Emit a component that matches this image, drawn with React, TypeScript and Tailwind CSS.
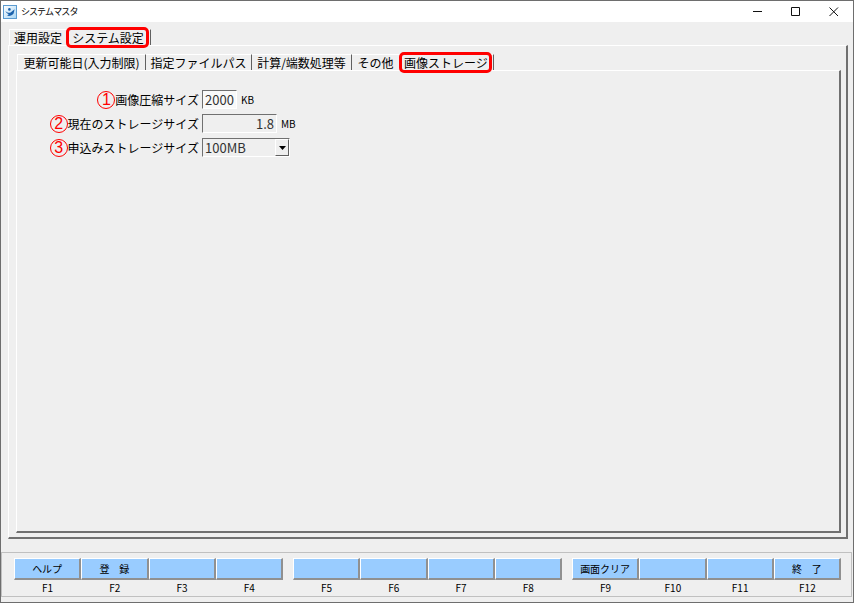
import { useState } from 'react';
import clsx from 'clsx';

const mainTabs = [
  { label: '運用設定', width: 'w-[57px]' },
  { label: 'システム設定', width: 'w-[85px]' },
];

const subTabs = [
  { label: '更新可能日(入力制限)', width: 'w-[129px]' },
  { label: '指定ファイルパス', width: 'w-[106px]' },
  { label: '計算/端数処理等', width: 'w-[100px]' },
  { label: 'その他', width: 'w-[47px]' },
  { label: '画像ストレージ', width: 'w-[95px]' },
];

const keyGroups = [
  [
    { key: 'F1', label: 'ヘルプ' },
    { key: 'F2', label: '登　録' },
    { key: 'F3', label: '' },
    { key: 'F4', label: '' },
  ],
  [
    { key: 'F5', label: '' },
    { key: 'F6', label: '' },
    { key: 'F7', label: '' },
    { key: 'F8', label: '' },
  ],
  [
    { key: 'F9', label: '画面クリア' },
    { key: 'F10', label: '' },
    { key: 'F11', label: '' },
    { key: 'F12', label: '終　了' },
  ],
];

const fieldClass =
  'h-[19px] rounded-none border border-t-[#707070] border-l-[#707070] border-r-white border-b-white px-[2px] text-[13px] leading-[17px] text-[#333] outline-none';

function AppIcon() {
  return (
    <svg width="14" height="14" viewBox="0 0 14 14" aria-hidden="true">
      <defs>
        <linearGradient id="appIcon" x1="0" y1="0" x2="1" y2="1">
          <stop offset="0" stopColor="#ffffff" />
          <stop offset="1" stopColor="#a4d3f2" />
        </linearGradient>
      </defs>
      <rect x="0.5" y="0.5" width="13" height="13" fill="url(#appIcon)" stroke="#5b9bd0" />
      <circle cx="6.4" cy="4.4" r="1.3" fill="#1b62ac" />
      <path d="M2.4 6C4 7.8 6 8.2 7.6 7.4L11.6 4.2 10.6 8.6C9 11 6 11.6 3.8 10.6 5.4 10.2 5.8 9.6 5.4 9 4 8.4 3 7.4 2.4 6Z" fill="#1b62ac" />
    </svg>
  );
}

function TitleBar() {
  return (
    <header className="flex h-[21px] items-center bg-white pl-[2px]">
      <AppIcon />
      <h1 className="ml-1 flex-1 text-[9px] leading-4 [font-feature-settings:'palt']">システムマスタ</h1>
      <button aria-label="最小化" className="flex h-full w-[38px] items-center justify-center">
        <svg width="10" height="10" viewBox="0 0 10 10" stroke="#111" fill="none">
          <path d="M0 4.5h9" />
        </svg>
      </button>
      <button aria-label="最大化" className="flex h-full w-[38px] items-center justify-center">
        <svg width="10" height="10" viewBox="0 0 10 10" stroke="#111" fill="none">
          <path d="M.5 .5h8v8h-8z" />
        </svg>
      </button>
      <button aria-label="閉じる" className="flex h-full w-[38px] items-center justify-center">
        <svg width="10" height="10" viewBox="0 0 10 10" stroke="#111" fill="none">
          <path d="m.5 .5 8.5 8.5M9 .5.5 9" />
        </svg>
      </button>
    </header>
  );
}

type TabBarProps = {
  tabs: { label: string; width: string }[];
  active: number;
  onChange: (index: number) => void;
};

function TabBar({ tabs, active, onChange }: TabBarProps) {
  return (
    <div role="tablist" className="flex pl-px">
      {tabs.map((tab, i) => (
        <button
          key={tab.label}
          role="tab"
          aria-selected={i === active}
          onClick={() => onChange(i)}
          className={clsx(
            'relative flex h-4 items-center justify-center border-t border-t-white text-[12px] leading-[14px] whitespace-nowrap',
            tab.width,
            i + 1 !== active && 'border-r border-r-[#606060]',
            i === 0 && 'border-l border-l-white'
          )}
        >
          {tab.label}
          {i === active && (
            <span className="absolute -top-[3px] right-px -bottom-[3px] left-0 rounded-[5px] border-3 border-[#f00]" />
          )}
        </button>
      ))}
    </div>
  );
}

function FieldLabel({ id, mark, children }: { id: string; mark: string; children: string }) {
  return (
    <label htmlFor={id} className="flex h-[19px] items-center justify-end pr-[3px] text-[12px] leading-[18px] whitespace-nowrap">
      <span className="flex size-[18px] items-center justify-center rounded-full border border-[#f00] font-['Liberation_Sans',sans-serif] text-[16px] leading-4 text-[#f00]">
        {mark}
      </span>
      {children}
    </label>
  );
}

function StorageForm() {
  const [size, setSize] = useState('2000');
  const [plan, setPlan] = useState('100MB');

  return (
    <form className="grid grid-cols-[185px_1fr] gap-y-[5px] pt-[19px]">
      <FieldLabel id="compress" mark="1">画像圧縮サイズ</FieldLabel>
      <div className="flex items-center gap-1">
        <input
          id="compress"
          value={size}
          onChange={(e) => setSize(e.target.value)}
          className={clsx(fieldClass, 'w-[35px] bg-[#f9f9f9]')}
        />
        <span className="text-[10px] leading-4">KB</span>
      </div>
      <FieldLabel id="current" mark="2">現在のストレージサイズ</FieldLabel>
      <div className="flex items-center gap-1">
        <input id="current" readOnly value="1.8" className={clsx(fieldClass, 'w-[75px] bg-[#efefef] text-right')} />
        <span className="text-[10px] leading-4">MB</span>
      </div>
      <FieldLabel id="plan" mark="3">申込みストレージサイズ</FieldLabel>
      <div className="relative w-[88px]">
        <select
          id="plan"
          value={plan}
          onChange={(e) => setPlan(e.target.value)}
          className={clsx(fieldClass, 'block w-full appearance-none bg-[#efefef]')}
        >
          <option>100MB</option>
        </select>
        <span className="pointer-events-none absolute top-px right-px bottom-px flex w-[14px] items-center justify-center border border-t-white border-r-[#606060] border-b-[#606060] border-l-white bg-[#efefef]">
          <svg width="7" height="4" viewBox="0 0 7 4" aria-hidden="true">
            <path d="M0 0h7L3.5 4z" fill="#000" />
          </svg>
        </span>
      </div>
    </form>
  );
}

function FunctionKeys() {
  return (
    <footer className="mt-[13px] mr-px mb-[5px] flex gap-[10px] border border-[#c0c0c0] pt-[5px] pr-[10px] pb-px pl-3">
      {keyGroups.map((group) => (
        <div key={group[0].key} className="grid flex-1 grid-cols-4">
          {group.map(({ key, label }) => (
            <div key={key} className="flex flex-col items-center">
              <button
                id={key}
                aria-label={label || key}
                className="h-[22px] w-full border-t border-r-2 border-b-2 border-l border-t-white border-r-[#909090] border-b-[#909090] border-l-white bg-[#99ccff] text-[10px] leading-4 whitespace-pre"
              >
                {label}
              </button>
              <label htmlFor={key} className="text-[10px] leading-[15px]">
                {key}
              </label>
            </div>
          ))}
        </div>
      ))}
    </footer>
  );
}

export default function App() {
  const [mainTab, setMainTab] = useState(1);
  const [subTab, setSubTab] = useState(4);

  return (
    <div className="flex min-h-screen flex-col border border-[#6e6e6e] bg-[#efefef] font-['Noto_Sans_CJK_JP',sans-serif] text-black">
      <TitleBar />
      <main className="flex flex-1 flex-col pt-[7px] pr-[5px] pl-[7px]">
        <TabBar tabs={mainTabs} active={mainTab} onChange={setMainTab} />
        <section className="flex flex-1 flex-col border-t border-r-2 border-b-2 border-l border-t-white border-r-[#707070] border-b-[#707070] border-l-white pt-2 pr-[5px] pb-1 pl-[7px]">
          <TabBar tabs={subTabs} active={subTab} onChange={setSubTab} />
          <section className="flex-1 border-t border-r-2 border-b-2 border-l border-t-white border-r-[#707070] border-b-[#707070] border-l-white">
            <StorageForm />
          </section>
        </section>
      </main>
      <FunctionKeys />
    </div>
  );
}
